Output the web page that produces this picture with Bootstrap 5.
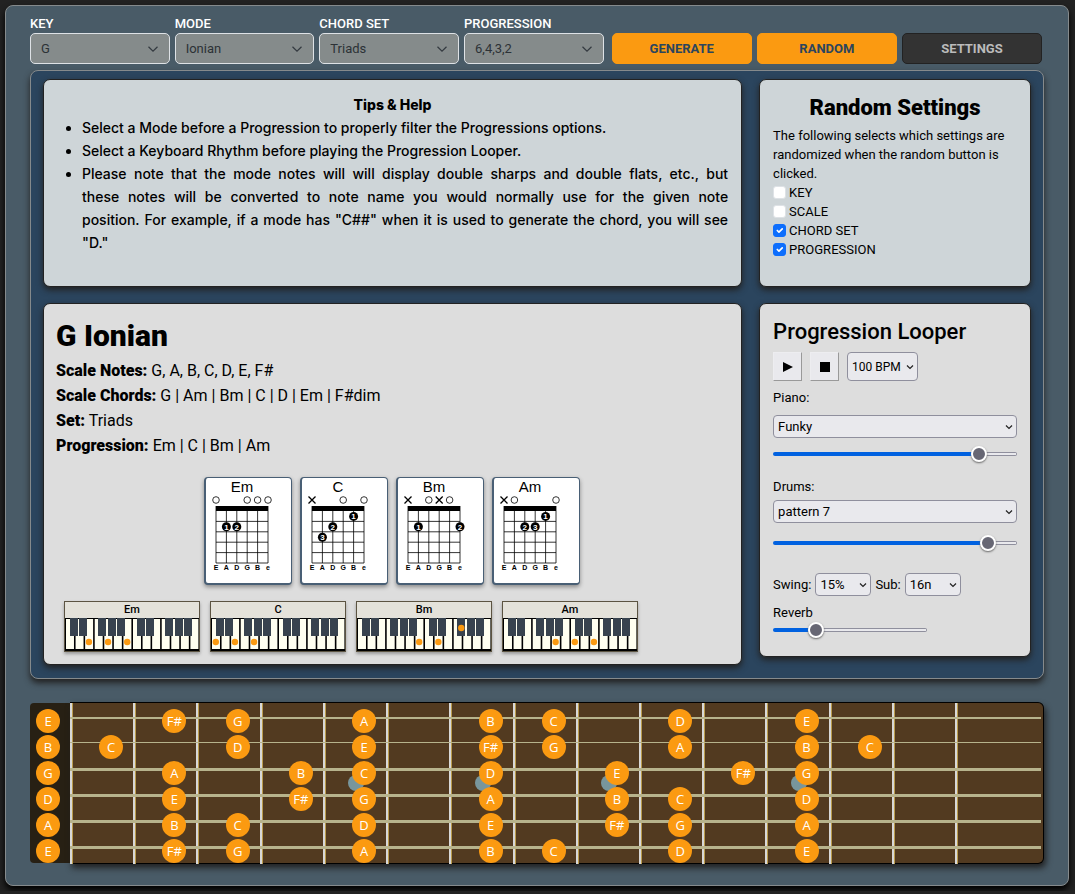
<!DOCTYPE html>
<html lang="en">
<head>
<meta charset="utf-8">
<meta name="viewport" content="width=device-width, initial-scale=1">
<title>Chord Progression Generator</title>
<link href="https://cdn.jsdelivr.net/npm/bootstrap@5.3.0/dist/css/bootstrap.min.css" rel="stylesheet">
<style>
  :root { --amber: #fb9a11; --navy: #2b455e; --slate: #495b67; }
  body { background: #222; color: #000; font-family: Roboto, "Liberation Sans", sans-serif; font-size: 13px; font-weight: 400; line-height: 18px; padding: 5px 6px 5px 5px; }
  h1, h2, h3, p, ul { margin: 0; }
  .shell { background: var(--slate); border: 1px solid #858a8c; border-radius: 8px; box-shadow: 0 4px 6px #000; padding: 8px 24px 21px; }
  .toolbar { display: grid; grid-template-columns: 4fr 3fr; column-gap: 8px; align-items: end; padding-right: 2px; margin-bottom: 6px; }
  .choices, .actions { display: grid; grid-auto-flow: column; grid-auto-columns: 1fr; gap: 5px; }
  .toolbar .btn { height: 31px; padding: 0; font-size: 13px; font-weight: 700; border-radius: 5px; }
  .toolbar label { display: block; color: #fff; line-height: 19px; font-weight: 500; white-space: nowrap; }
  .toolbar .form-select { height: 31px; padding: 0 10px; font-size: 13px; color: #2c3236; border-color: #dee2e6; border-radius: 5px; background-color: #858b8b; background-position: right 10px center; background-size: 12px; background-image: url("data:image/svg+xml,%3csvg xmlns='http://www.w3.org/2000/svg' viewBox='0 0 16 16'%3e%3cpath fill='none' stroke='%23343a40' stroke-width='1.6' d='m2 5 6 6 6-6'/%3e%3c/svg%3e"); }
  .btn-amber, .btn-amber:hover { background: var(--amber); color: var(--navy); border-color: var(--amber); }
  .btn-coal, .btn-coal:hover { background: #333; color: #bbb; border-color: #222; }
  .stage { display: grid; grid-template-columns: 18fr 7fr; gap: 16px 17px; align-items: start; background: var(--navy); border: 1px solid #858a8c; border-radius: 8px; box-shadow: 0 4px 6px #222; padding: 8px 12px 13px; margin-bottom: 24px; }
  .pane { background: #ddd; border: 1px solid #222; border-radius: 7px; box-shadow: 0 3px 6px #222; padding: 14px 13px 18px; }
  .pane-scale { padding: 14px 14px 8px 12px; }
  .pane-info { background: #ced5d8; min-height: 208px; }
  .tips { font-family: Inter, Roboto, sans-serif; font-size: 14px; font-weight: 500; line-height: 23px; text-align: justify; padding-top: 13px; }
  .tips b { font-weight: 800; }
  .tips ul { padding-left: 25px; }
  .pane h2 { font-size: 22px; line-height: 28px; font-weight: 500; }
  .pane h2.strong-title { font-weight: 900; }
  .note { line-height: 19px; }
  .note .form-check-input { width: 13px; height: 13px; margin: 0 3px 0 0; border-color: #dee2e6; border-radius: 3px; flex: none; }
  .note .form-check-input:checked { border-color: #0d6efd; }
  .scale-title { font-size: 30px; line-height: 36px; font-weight: 900; margin-bottom: 4px; }
  .facts { font-size: 16px; line-height: 25px; font-weight: 400; }
  .facts b { font-weight: 900; }
  .chord-row { margin-top: 19px; }
  .piano-row { gap: 10px; }
  .chord { width: 88px; height: 108px; background: #fff; border: 1px solid #495f75; border-left-width: 2px; border-bottom-width: 2px; border-radius: 4px; box-shadow: 0 2px 4px #888; }
  .chord svg, .piano svg { display: block; }
  .piano { width: 136px; background: #e4e2da; border: 1px solid #5c5442; box-shadow: 0 2px 3px #999; font-size: 11px; line-height: 16px; font-weight: 500; text-align: center; }
  .loop-btn { width: 29px; height: 29px; padding: 0; background: #e9e9ed; border: 1px solid #ededf0; border-right-color: #999; border-bottom-color: #999; display: grid; place-items: center; }
  .pick { appearance: none; height: 23px; padding: 0 4px; color: #000; border: 1px solid #8f8f9d; border-radius: 4px; background: #e9e9ed url("data:image/svg+xml,%3csvg xmlns='http://www.w3.org/2000/svg' viewBox='0 0 8 8'%3e%3cpath fill='none' stroke='%23222' stroke-width='1.2' d='m1 2.5 3 3 3-3'/%3e%3c/svg%3e") no-repeat right 3px center / 8px; }
  .pick-tall { width: 71px; height: 29px; font-size: 12px; }
  .pick-short { width: 56px; }
  .transport { margin-top: 6px; }
  .slide { appearance: none; display: block; width: 100%; height: 16px; margin: 0; background: none; }
  .slide-drums { margin: 12px 0 22px; }
  .slide-short { width: 154px; }
  .slide::-webkit-slider-runnable-track { height: 4px; border-radius: 2px; background: linear-gradient(#0061e0, #0061e0) left / var(--fill) 100% no-repeat, linear-gradient(#e9e9ed, #e9e9ed) center / calc(100% - 2px) 2px no-repeat, #8f8f9d; }
  .slide::-webkit-slider-thumb { appearance: none; width: 16px; height: 16px; margin-top: -6px; border: 2px solid #fff; border-radius: 50%; background: #676774; box-shadow: 0 1px 2px #666; }
  .fretboard { display: grid; grid-template-columns: 40px 1fr; font-family: "Open Sans", "Noto Sans", sans-serif; font-weight: 500; color: #fff; }
  .nut { background: #272014; border-radius: 4px 0 0 4px; padding: 6px 10px 0 6px; height: 160px; }
  .board { background: #523a20; border: 1px solid #000; border-left: 0; border-radius: 0 6px 6px 0; box-shadow: 2px 4px 6px #222; height: 162px; margin-top: -1px; padding-right: 2px; }
  .frets { display: grid; grid-template-columns: repeat(14, 1fr) 86px; height: 160px; }
  .fret { border-left: 2px solid #d8d8d8; box-shadow: inset 1px 0 #b99b4c; padding-top: 5px; }
  .cell { position: relative; height: 26px; padding: 1px 10px 0 0; margin-left: -2px; display: flex; justify-content: flex-end; background: linear-gradient(#b7b38c, #b7b38c) 0 8px / 100% 3px no-repeat; }
  .cell:nth-child(1) { background-size: 100% 2px; background-position: 0 9px; }
  .cell:nth-child(2) { background-size: 100% 1px; }
  .dot { z-index: 1; width: 24px; height: 24px; border-radius: 50%; background: var(--amber); text-align: center; line-height: 24px; }
  .nut .dot { margin-bottom: 2px; }
  .inlay { position: absolute; top: 15px; right: 22px; width: 16px; height: 16px; border-radius: 50%; background: #78969c; }
</style>
</head>
<body>
<main class="shell">
  <form class="toolbar">
    <div class="choices">
      <div><label for="key">KEY</label><select id="key" class="form-select"><option>G</option></select></div>
      <div><label for="mode">MODE</label><select id="mode" class="form-select"><option>Ionian</option></select></div>
      <div><label for="set">CHORD SET</label><select id="set" class="form-select"><option>Triads</option></select></div>
      <div><label for="prog">PROGRESSION</label><select id="prog" class="form-select"><option>6,4,3,2</option></select></div>
    </div>
    <div class="actions">
      <button type="button" class="btn btn-amber">GENERATE</button>
      <button type="button" class="btn btn-amber">RANDOM</button>
      <button type="button" class="btn btn-coal">SETTINGS</button>
    </div>
  </form>

  <div class="stage">
    <section class="pane pane-info tips">
      <div class="text-center"><b>Tips &amp; Help</b></div>
      <ul>
        <li>Select a Mode before a Progression to properly filter the Progressions options.</li>
        <li>Select a Keyboard Rhythm before playing the Progression Looper.</li>
        <li>Please note that the mode notes will will display double sharps and double flats, etc., but these&nbsp;notes will be converted to note name you would normally use for the given note position.&nbsp;For example, if a mode has "C##" when it is used to generate the chord, you will see "D."</li>
      </ul>
    </section>

    <section class="pane pane-info note">
      <h2 class="text-center strong-title mb-1">Random Settings</h2>
      <p>The following selects which settings are randomized when the random button is clicked.</p>
      <div class="d-flex align-items-center"><input class="form-check-input" type="checkbox" id="rKey"><label for="rKey">KEY</label></div>
      <div class="d-flex align-items-center"><input class="form-check-input" type="checkbox" id="rScale"><label for="rScale">SCALE</label></div>
      <div class="d-flex align-items-center"><input class="form-check-input" type="checkbox" id="rSet" checked><label for="rSet">CHORD SET</label></div>
      <div class="d-flex align-items-center"><input class="form-check-input" type="checkbox" id="rProg" checked><label for="rProg">PROGRESSION</label></div>
    </section>

    <section class="pane pane-scale">
      <h1 class="scale-title">G Ionian</h1>
      <div class="facts">
        <div><b>Scale Notes:</b> G, A, B, C, D, E, F#</div>
        <div><b>Scale Chords:</b> G | Am | Bm | C | D | Em | F#dim</div>
        <div><b>Set:</b> Triads</div>
        <div><b>Progression:</b> Em | C | Bm | Am</div>
      </div>
      <div id="chords" class="d-flex justify-content-center gap-2 chord-row"></div>
      <div id="pianos" class="d-flex piano-row mt-3 ms-2 mb-1"></div>
    </section>

    <section class="pane">
      <h2>Progression Looper</h2>
      <div class="d-flex gap-2 transport">
        <button type="button" class="loop-btn" aria-label="Play"><svg width="10" height="12"><path d="M0 1v10l10-5z"/></svg></button>
        <button type="button" class="loop-btn" aria-label="Stop"><svg width="10" height="10"><path d="M0 0h10v10H0z"/></svg></button>
        <select class="pick pick-tall" aria-label="Tempo"><option>100 BPM</option></select>
      </div>
      <label for="piano" class="d-block mt-2 mb-2">Piano:</label>
      <select id="piano" class="pick w-100 d-block"><option>Funky</option></select>
      <input type="range" class="slide mt-2" aria-label="Piano volume" value="87">
      <label for="drums" class="d-block mt-3">Drums:</label>
      <select id="drums" class="pick w-100 d-block mt-1"><option>pattern 7</option></select>
      <input type="range" class="slide slide-drums" aria-label="Drum volume" value="91">
      <div class="d-flex align-items-center gap-1">
        <label for="swing">Swing:</label>
        <select id="swing" class="pick pick-short"><option>15%</option></select>
        <label for="sub">Sub:</label>
        <select id="sub" class="pick pick-short"><option>16n</option></select>
      </div>
      <label for="reverb" class="d-block mt-2">Reverb</label>
      <input id="reverb" type="range" class="slide slide-short" value="25">
    </section>
  </div>

  <section class="fretboard" aria-label="Fretboard">
    <div class="nut" id="nut"></div>
    <div class="board"><div class="frets" id="frets"></div></div>
  </section>
</main>

<script src="https://cdn.jsdelivr.net/npm/bootstrap@5.3.0/dist/js/bootstrap.bundle.min.js"></script>
<script>
  // tops: marker above each string; dots: [string, fret]; keys: white key index, 'b' + n is the black key after n whites
  const chords = [
    { name: 'Em', tops: 'o  ooo', dots: [[1, 2], [2, 2]], keys: [2, 4, 6] },
    { name: 'C', tops: 'x  o o', dots: [[4, 1], [2, 2], [1, 3]], keys: [0, 2, 4] },
    { name: 'Bm', tops: 'x oxo ', dots: [[1, 2], [5, 2]], keys: [6, 8, 'b11'] },
    { name: 'Am', tops: 'xo   o', dots: [[4, 1], [2, 2], [3, 2]], keys: [5, 7, 9] }
  ];
  const sx = i => 10 + i * 10.4, fy = n => 33 + n * 10.4;
  function chordSvg(c) {
    let s = `<svg width="84" height="104" font-family="Liberation Sans, sans-serif" text-anchor="middle"><text x="36" y="14" font-size="15">${c.name}</text>`;
    for (let i = 0; i < 6; i++) {
      const x = sx(i);
      s += `<path d="M${x} 33V85" stroke="#000" stroke-width=".8"/><text x="${x}" y="92" font-size="7" font-weight="700">${'EADGBe'[i]}</text>`;
      if (c.tops[i] === 'o') s += `<circle cx="${x}" cy="22" r="3.3" fill="none" stroke="#000" stroke-width=".8"/>`;
      if (c.tops[i] === 'x') s += `<path d="M${x - 3.5} 18.500l7 7m0-7l-7 7" stroke="#000" stroke-width="1.3"/>`;
    }
    for (let n = 1; n < 6; n++) s += `<path d="M10 ${fy(n)}h52" stroke="#000" stroke-width=".8"/>`;
    s += '<path d="M9.600 28h52.800v5H9.600z"/>';
    c.dots.forEach(([i, n], k) => {
      s += `<circle cx="${sx(i)}" cy="${fy(n) - 5}" r="4.500"/><text x="${sx(i)}" y="${fy(n) - 2.2}" font-size="8" font-weight="700" fill="#fff">${k + 1}</text>`;
    });
    return s + '</svg>';
  }
  function pianoSvg(c) {
    const w = 134 / 14;
    let s = '<svg width="134" height="33"><path d="M0 0h134v33H0z"/>';
    for (let i = 0; i < 14; i++) s += `<rect x="${i * w + 1}" y="1" width="${w - 1.6}" height="30" fill="#fffff0"/>`;
    for (const n of [1, 2, 4, 5, 6, 8, 9, 11, 12, 13]) s += `<rect x="${Math.round(n * w) - 5}" width="8" height="18" fill="#38434e"/>`;
    for (const k of c.keys) {
      const black = typeof k === 'string';
      s += `<circle cx="${black ? k.slice(1) * w - 1 : (k + .5) * w}" cy="${black ? 10 : 24}" r="3.200" fill="#fb9a11"/>`;
    }
    return s + '</svg>';
  }
  document.getElementById('chords').innerHTML = chords.map(c => `<div class="chord">${chordSvg(c)}</div>`).join('');
  document.getElementById('pianos').innerHTML = chords.map(c => `<div class="piano">${c.name}${pianoSvg(c)}</div>`).join('');

  // notes shown on each string, by fret number
  const strings = [
    { 0: 'E', 2: 'F#', 3: 'G', 5: 'A', 7: 'B', 8: 'C', 10: 'D', 12: 'E' },
    { 0: 'B', 1: 'C', 3: 'D', 5: 'E', 7: 'F#', 8: 'G', 10: 'A', 12: 'B', 13: 'C' },
    { 0: 'G', 2: 'A', 4: 'B', 5: 'C', 7: 'D', 9: 'E', 11: 'F#', 12: 'G' },
    { 0: 'D', 2: 'E', 4: 'F#', 5: 'G', 7: 'A', 9: 'B', 10: 'C', 12: 'D' },
    { 0: 'A', 2: 'B', 3: 'C', 5: 'D', 7: 'E', 9: 'F#', 10: 'G', 12: 'A' },
    { 0: 'E', 2: 'F#', 3: 'G', 5: 'A', 7: 'B', 8: 'C', 10: 'D', 12: 'E' }
  ];
  const dot = t => t ? `<div class="dot">${t}</div>` : '';
  document.getElementById('nut').innerHTML = strings.map(s => dot(s[0])).join('');
  let html = '';
  for (let f = 1; f <= 15; f++) {
    html += '<div class="fret">' + strings.map((s, i) =>
      `<div class="cell">${i === 2 && [5, 7, 9, 12].includes(f) ? '<span class="inlay"></span>' : ''}${dot(s[f])}</div>`).join('') + '</div>';
  }
  document.getElementById('frets').innerHTML = html;

  document.querySelectorAll('.slide').forEach(r => {
    const paint = () => r.style.setProperty('--fill', r.value + '%');
    r.addEventListener('input', paint);
    paint();
  });
</script>
</body>
</html>
